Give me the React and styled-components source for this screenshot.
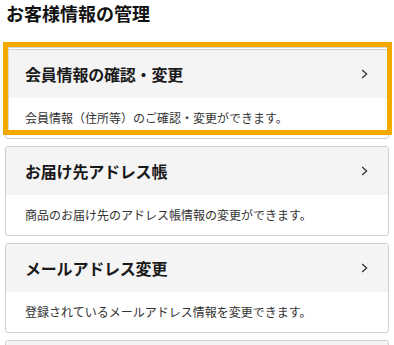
import React from "react";
import styled, { createGlobalStyle } from "styled-components";

const Global = createGlobalStyle`
  html, body { margin: 0; padding: 0; background: #fff; }
  body { font-family: "Noto Sans CJK JP", "Noto Sans", sans-serif; color: #222; }
`;

const Page = styled.div`
  width: 394px;
  height: 345px;
  overflow: hidden;
  display: flex;
  flex-direction: column;
`;

const Title = styled.h2`
  flex-shrink: 0;
  margin: 0 0 17px;
  padding: 0 6px;
  font-size: 18px;
  line-height: 26px;
  font-weight: 700;
  color: #111;
  height: 32px;
`;

const List = styled.div`
  flex-shrink: 0;
  display: flex;
  flex-direction: column;
  gap: 7px;
  padding: 0 5px;
`;

const CardWrap = styled.div`
  position: relative;
  flex-shrink: 0;
`;

const Card = styled.div`
  flex-shrink: 0;
  border: 1px solid #cfcfcf;
  border-radius: 3px;
  overflow: hidden;
  background: #fff;
`;

const Header = styled.div`
  height: 48px;
  background: #f4f4f4;
  display: flex;
  align-items: center;
  justify-content: space-between;
  padding: 0 20px 0 19px;
`;

const HeaderText = styled.span`
  font-size: 16px;
  line-height: 20px;
  font-weight: 700;
  color: #1a1a1a;
  letter-spacing: -0.2px;
`;

const Desc = styled.div`
  height: 40px;
  display: flex;
  align-items: center;
  padding: 0 19px;
  font-size: 12px;
  line-height: 16px;
  color: #333;
`;

const Focus = styled.div`
  position: absolute;
  left: -2px;
  right: -3px;
  top: -7px;
  bottom: 4px;
  border: 5px solid #f5a800;
  pointer-events: none;
  &::after {
    content: "";
    position: absolute;
    inset: 0;
    border-top: 1px solid #d8d8d8;
    border-left: 1px solid #d8d8d8;
  }
`;

const Chevron = () => (
  <svg width="7" height="10" viewBox="0 0 7 10">
    <path d="M1.2 1 L5.6 5 L1.2 9" fill="none" stroke="#333" strokeWidth="1.3" />
  </svg>
);

const items = [
  { title: "会員情報の確認・変更", desc: "会員情報（住所等）のご確認・変更ができます。", focus: true },
  { title: "お届け先アドレス帳", desc: "商品のお届け先のアドレス帳情報の変更ができます。" },
  { title: "メールアドレス変更", desc: "登録されているメールアドレス情報を変更できます。" },
];

export default function App() {
  return (
    <Page>
      <Global />
      <Title>お客様情報の管理</Title>
      <List>
        {items.map((it) => (
          <CardWrap key={it.title}>
            <Card>
              <Header>
                <HeaderText>{it.title}</HeaderText>
                <Chevron />
              </Header>
              <Desc>{it.desc}</Desc>
            </Card>
            {it.focus && <Focus />}
          </CardWrap>
        ))}
        <Card>
          <Header />
        </Card>
      </List>
    </Page>
  );
}
